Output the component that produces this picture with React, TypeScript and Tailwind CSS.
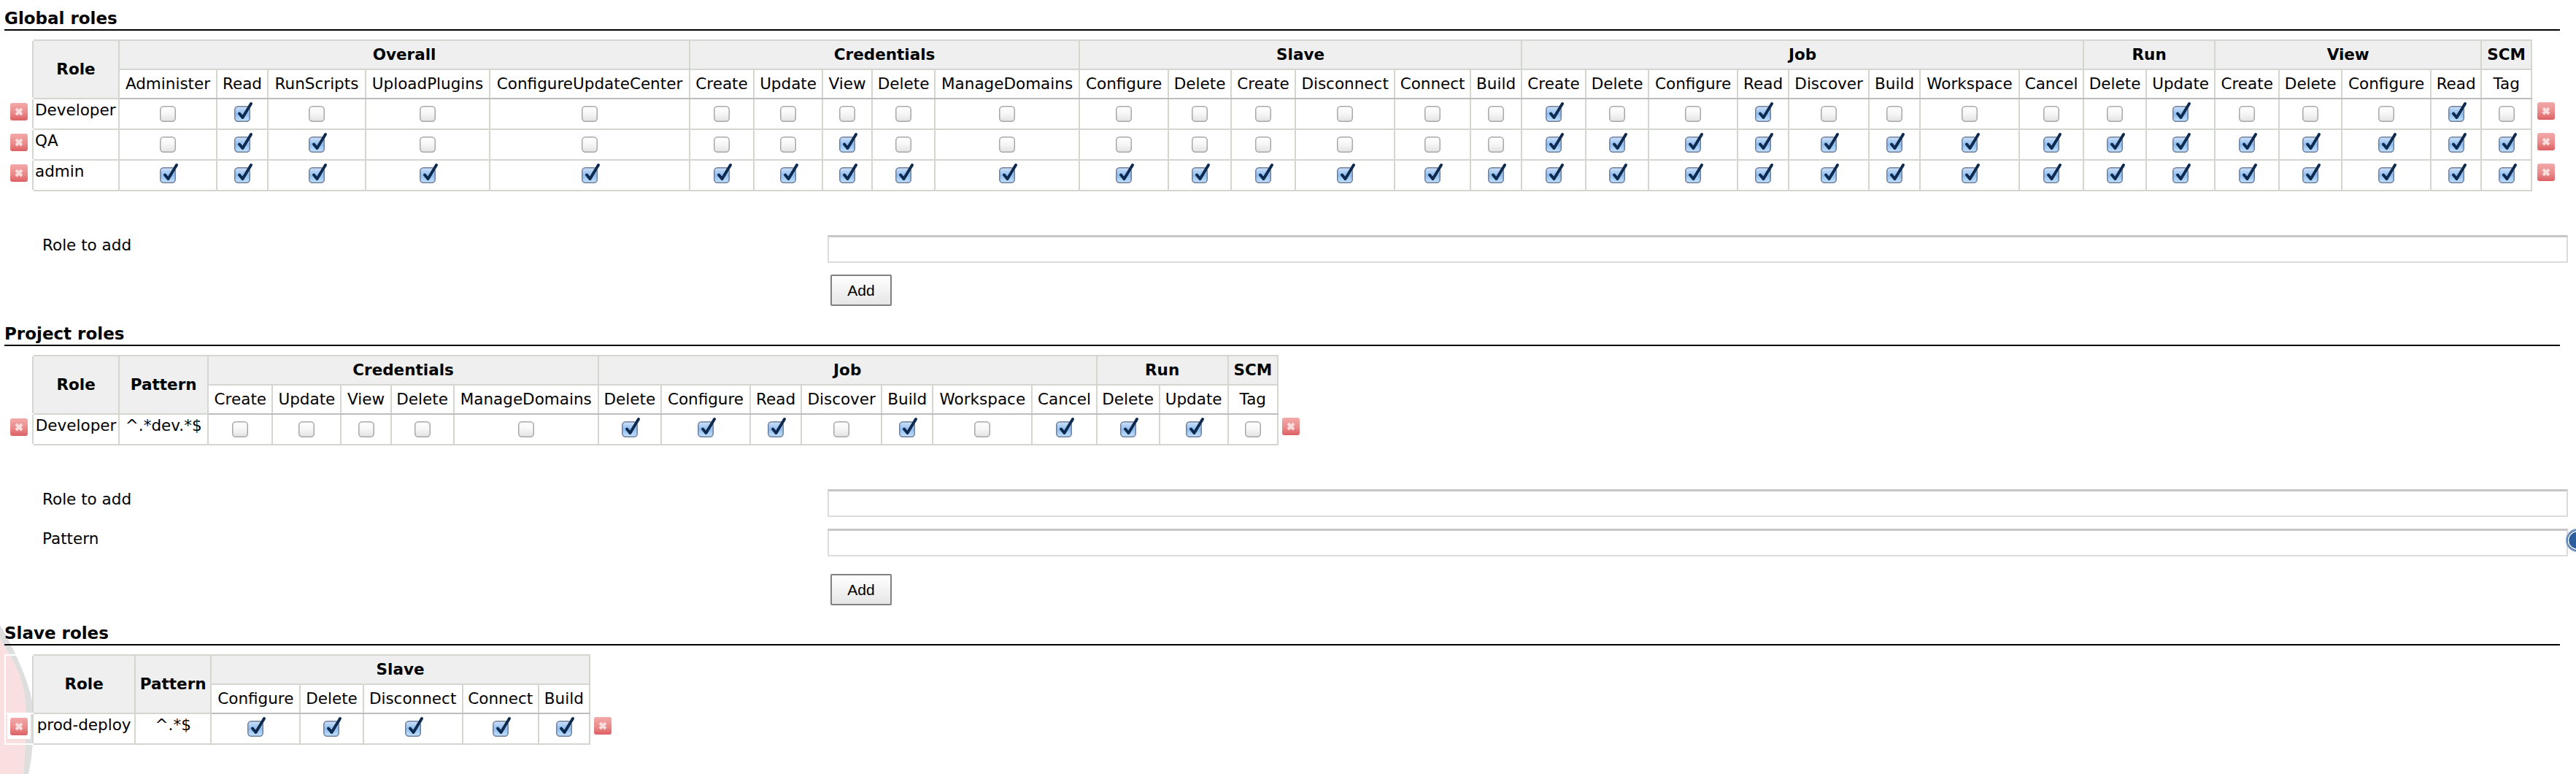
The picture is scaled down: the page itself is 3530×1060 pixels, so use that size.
import React from "react";

type Group = { name: string; cols: { label: string; width: string; on: boolean[] }[] };

interface RoleTableProps {
    fixed: { label: string; width: string }[];
    groups: Group[];
    rows: string[][];
    rightWidth: string;
    tableWidth: string;
}

function DeleteIcon() {
    return (
        <span className="block w-[32px] h-[34px] mx-auto bg-white pt-[5px] pl-[4px]">
            <svg width="24" height="24" viewBox="0 0 24 24" className="block">
                <defs>
                    <linearGradient id="redFill" x1="0" y1="0" x2="0" y2="1">
                        <stop offset="0" stopColor="#f2a9a9" />
                        <stop offset="0.55" stopColor="#eb8b8b" />
                        <stop offset="1" stopColor="#dc6064" />
                    </linearGradient>
                </defs>
                <rect x="0" y="0" width="24" height="24" rx="3" fill="url(#redFill)" />
                <path d="M8 8 L16 16 M16 8 L8 16" stroke="#f9dcdc" strokeWidth="4" />
            </svg>
        </span>
    );
}

function Checkbox({ checked }: { checked: boolean }) {
    return (
        <svg width="22" height="22" viewBox="0 0 22 22" className="block mx-auto overflow-visible">
            <defs>
                <linearGradient id="boxOff" x1="0" y1="0" x2="0" y2="1">
                    <stop offset="0" stopColor="#ffffff" />
                    <stop offset="0.5" stopColor="#f6f6f6" />
                    <stop offset="1" stopColor="#e2e2e2" />
                </linearGradient>
                <linearGradient id="boxOn" x1="0" y1="0" x2="0" y2="1">
                    <stop offset="0" stopColor="#cfe2f8" />
                    <stop offset="0.5" stopColor="#8fbdf0" />
                    <stop offset="1" stopColor="#c4e2fb" />
                </linearGradient>
            </defs>
            <rect
                x="0.75"
                y="0.75"
                width="20.5"
                height="20.5"
                rx="4.5"
                fill={checked ? "url(#boxOn)" : "url(#boxOff)"}
                stroke={checked ? "#6f7f9c" : "#a8a8a8"}
                strokeWidth="1.5"
            />
            {checked && (
                <path
                    d="M7 10.5 L11.5 16 L23 -3"
                    fill="none"
                    stroke="#0e2a4e"
                    strokeWidth="4"
                    strokeLinecap="round"
                    strokeLinejoin="round"
                />
            )}
        </svg>
    );
}

function RoleTable({ fixed, groups, rows, rightWidth, tableWidth }: RoleTableProps) {
    const cols = groups.flatMap((g) => g.cols);
    const th = "border-2 border-[#d3d7cf] bg-[#efefef] font-bold p-0 text-center";

    return (
        <table className={`ml-[6px] mt-[12px] table-fixed border-collapse ${tableWidth}`}>
            <colgroup>
                <col className="w-[38px]" />
                {fixed.map((f) => (
                    <col key={f.label} className={f.width} />
                ))}
                {cols.map((c, i) => (
                    <col key={i} className={c.width} />
                ))}
                <col className={rightWidth} />
            </colgroup>
            <thead>
                <tr className="h-[40px]">
                    <th rowSpan={2} className="border-2 border-r-0 border-white p-0"></th>
                    {fixed.map((f) => (
                        <th key={f.label} rowSpan={2} className={th}>
                            {f.label}
                        </th>
                    ))}
                    {groups.map((g) => (
                        <th key={g.name} colSpan={g.cols.length} className={th}>
                            {g.name}
                        </th>
                    ))}
                    <th rowSpan={2} className="p-0"></th>
                </tr>
                <tr className="h-[40px]">
                    {cols.map((c, i) => (
                        <th
                            key={i}
                            className="border-2 border-[#d3d7cf] border-b-[#bdbdbd] bg-white font-normal p-0 text-center whitespace-nowrap"
                        >
                            {c.label}
                        </th>
                    ))}
                </tr>
            </thead>
            <tbody>
                {rows.map((row, r) => (
                    <tr key={r} className="h-[42px]">
                        <td className="border-2 border-r-0 border-white p-0 align-top">
                            <DeleteIcon />
                        </td>
                        {row.map((text, i) => (
                            <td
                                key={i}
                                className={`border-2 border-[#d3d7cf] bg-white p-0 pt-[3px] align-top whitespace-nowrap ${
                                    i === 0 && fixed.length === 1 ? "pl-[2px]" : "text-center"
                                }`}
                            >
                                {text}
                            </td>
                        ))}
                        {cols.map((c, i) => (
                            <td key={i} className="border-2 border-[#d3d7cf] bg-white p-0 align-middle">
                                <Checkbox checked={c.on[r]} />
                            </td>
                        ))}
                        <td className="p-0 align-top">
                            <DeleteIcon />
                        </td>
                    </tr>
                ))}
            </tbody>
        </table>
    );
}

function SectionTitle({ children }: { children: string }) {
    return (
        <div className="ml-[6px] mr-[22px] h-[42px] border-b-2 border-black font-bold text-[23px] pt-[13px] leading-[24px]">
            {children}
        </div>
    );
}

function FormRow({ label, help }: { label: string; help?: boolean }) {
    return (
        <div className="flex relative">
            <div className="w-[1134px] pl-[58px] pt-[2px] leading-[24px]">{label}</div>
            <input
                type="text"
                className="flex-1 mr-[11px] h-[38px] bg-white border-2 border-[#dcdcdc] border-t-[3px] border-t-[#c6c6c6] outline-none"
            />
            {help && (
                <svg width="32" height="32" viewBox="0 0 32 32" className="absolute right-[-18px] top-0">
                    <circle cx="16" cy="16" r="15" fill="#2d5f9e" stroke="#7f9ec6" strokeWidth="2" />
                    <circle cx="16" cy="16" r="12.5" fill="none" stroke="#ffffff" strokeWidth="1.5" />
                </svg>
            )}
        </div>
    );
}

function AddButton({ className }: { className: string }) {
    return (
        <button
            className={`block ml-[1138px] w-[84px] h-[43px] border-2 border-[#808080] rounded-[2px] bg-linear-to-b from-white to-[#e6e6e6] text-[21px] text-black font-['Liberation_Sans',Arial,sans-serif] ${className}`}
        >
            Add
        </button>
    );
}

const flags = (s: string) => s.split("").map((c) => c === "1");

const globalGroups: Group[] = [
    {
        name: "Overall",
        cols: [
            { label: "Administer", width: "w-[134px]", on: flags("001") },
            { label: "Read", width: "w-[70px]", on: flags("111") },
            { label: "RunScripts", width: "w-[134px]", on: flags("011") },
            { label: "UploadPlugins", width: "w-[170px]", on: flags("001") },
            { label: "ConfigureUpdateCenter", width: "w-[274px]", on: flags("001") },
        ],
    },
    {
        name: "Credentials",
        cols: [
            { label: "Create", width: "w-[88px]", on: flags("001") },
            { label: "Update", width: "w-[94px]", on: flags("001") },
            { label: "View", width: "w-[68px]", on: flags("011") },
            { label: "Delete", width: "w-[86px]", on: flags("001") },
            { label: "ManageDomains", width: "w-[198px]", on: flags("001") },
        ],
    },
    {
        name: "Slave",
        cols: [
            { label: "Configure", width: "w-[122px]", on: flags("001") },
            { label: "Delete", width: "w-[86px]", on: flags("001") },
            { label: "Create", width: "w-[88px]", on: flags("001") },
            { label: "Disconnect", width: "w-[136px]", on: flags("001") },
            { label: "Connect", width: "w-[104px]", on: flags("001") },
            { label: "Build", width: "w-[70px]", on: flags("001") },
        ],
    },
    {
        name: "Job",
        cols: [
            { label: "Create", width: "w-[88px]", on: flags("111") },
            { label: "Delete", width: "w-[86px]", on: flags("011") },
            { label: "Configure", width: "w-[122px]", on: flags("011") },
            { label: "Read", width: "w-[70px]", on: flags("111") },
            { label: "Discover", width: "w-[110px]", on: flags("011") },
            { label: "Build", width: "w-[70px]", on: flags("011") },
            { label: "Workspace", width: "w-[136px]", on: flags("011") },
            { label: "Cancel", width: "w-[88px]", on: flags("011") },
        ],
    },
    {
        name: "Run",
        cols: [
            { label: "Delete", width: "w-[86px]", on: flags("011") },
            { label: "Update", width: "w-[94px]", on: flags("111") },
        ],
    },
    {
        name: "View",
        cols: [
            { label: "Create", width: "w-[88px]", on: flags("011") },
            { label: "Delete", width: "w-[86px]", on: flags("011") },
            { label: "Configure", width: "w-[122px]", on: flags("011") },
            { label: "Read", width: "w-[69px]", on: flags("111") },
        ],
    },
    {
        name: "SCM",
        cols: [{ label: "Tag", width: "w-[69px]", on: flags("011") }],
    },
];

const projectGroups: Group[] = [
    {
        name: "Credentials",
        cols: [
            { label: "Create", width: "w-[88px]", on: [false] },
            { label: "Update", width: "w-[94px]", on: [false] },
            { label: "View", width: "w-[68px]", on: [false] },
            { label: "Delete", width: "w-[86px]", on: [false] },
            { label: "ManageDomains", width: "w-[198px]", on: [false] },
        ],
    },
    {
        name: "Job",
        cols: [
            { label: "Delete", width: "w-[86px]", on: [true] },
            { label: "Configure", width: "w-[122px]", on: [true] },
            { label: "Read", width: "w-[70px]", on: [true] },
            { label: "Discover", width: "w-[110px]", on: [false] },
            { label: "Build", width: "w-[70px]", on: [true] },
            { label: "Workspace", width: "w-[136px]", on: [false] },
            { label: "Cancel", width: "w-[88px]", on: [true] },
        ],
    },
    {
        name: "Run",
        cols: [
            { label: "Delete", width: "w-[86px]", on: [true] },
            { label: "Update", width: "w-[94px]", on: [true] },
        ],
    },
    {
        name: "SCM",
        cols: [{ label: "Tag", width: "w-[68px]", on: [false] }],
    },
];

const slaveGroups: Group[] = [
    {
        name: "Slave",
        cols: [
            { label: "Configure", width: "w-[122px]", on: [true] },
            { label: "Delete", width: "w-[86px]", on: [true] },
            { label: "Disconnect", width: "w-[136px]", on: [true] },
            { label: "Connect", width: "w-[104px]", on: [true] },
            { label: "Build", width: "w-[70px]", on: [true] },
        ],
    },
];

export default function App() {
    return (
        <div className="relative w-[3530px] h-[1060px] overflow-hidden bg-white text-black text-[21.5px] leading-[24px] font-['DejaVu_Sans',Verdana,sans-serif]">
            {/* faded logo behind the page, only its edge shows */}
            <svg width="50" height="210" viewBox="0 0 50 210" className="absolute left-0 top-[850px]">
                <path d="M0 25 C12 45 30 70 34 105 C37 130 35 170 32 210 L0 210 Z" fill="#f9dfdf" />
                <path
                    d="M0 6 C20 40 44 90 46 125 C46 160 44 190 39 210 L32 210 C35 170 37 130 34 105 C30 70 12 45 0 25 Z"
                    fill="#dedede"
                />
            </svg>

            <div className="relative">
                <SectionTitle>Global roles</SectionTitle>
                <RoleTable
                    tableWidth="w-[3502px]"
                    rightWidth="w-[39px]"
                    fixed={[{ label: "Role", width: "w-[118px]" }]}
                    groups={globalGroups}
                    rows={[["Developer"], ["QA"], ["admin"]]}
                />

                <div className="mt-[60px]">
                    <FormRow label="Role to add" />
                </div>
                <AddButton className="mt-[16px]" />

                <div className="mt-[13px]">
                    <SectionTitle>Project roles</SectionTitle>
                </div>
                <RoleTable
                    tableWidth="w-[1781px]"
                    rightWidth="w-[36px]"
                    fixed={[
                        { label: "Role", width: "w-[118px]" },
                        { label: "Pattern", width: "w-[122px]" },
                    ]}
                    groups={projectGroups}
                    rows={[["Developer", "^.*dev.*$"]]}
                />

                <div className="mt-[60px]">
                    <FormRow label="Role to add" />
                </div>
                <div className="mt-[16px]">
                    <FormRow label="Pattern" help />
                </div>
                <AddButton className="mt-[24px]" />

                <div className="mt-[13px]">
                    <SectionTitle>Slave roles</SectionTitle>
                </div>
                <RoleTable
                    tableWidth="w-[838px]"
                    rightWidth="w-[36px]"
                    fixed={[
                        { label: "Role", width: "w-[140px]" },
                        { label: "Pattern", width: "w-[104px]" },
                    ]}
                    groups={slaveGroups}
                    rows={[["prod-deploy", "^.*$"]]}
                />
            </div>
        </div>
    );
}
